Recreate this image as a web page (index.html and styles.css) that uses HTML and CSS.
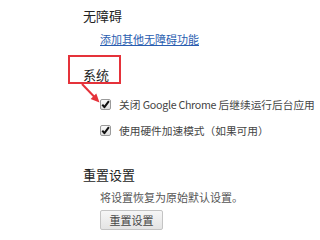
FILE: index.html
```html
<!DOCTYPE html>
<html lang="zh-CN">
<head>
<meta charset="utf-8">
<link rel="stylesheet" href="styles.css">
</head>
<body>
<div class="page">
  <section class="sec">
    <h3 class="title">无障碍</h3>
    <div class="body"><a class="link" href="#">添加其他无障碍功能</a></div>
  </section>
  <section class="sec sec-system">
    <h3 class="title">系统</h3>
    <div class="body">
      <label class="check">
        <svg class="box" width="11" height="11" viewBox="0 0 11 11"><defs><linearGradient id="g" x1="0" y1="0" x2="0" y2="1"><stop offset="0" stop-color="#fdfdfd"/><stop offset="1" stop-color="#dedede"/></linearGradient></defs><rect x="0.5" y="0.5" width="10" height="10" rx="1.5" fill="url(#g)" stroke="#9a9a9a"/><path d="M2.3 5.6 L4.4 8.2 L8.9 2.2" fill="none" stroke="#111" stroke-width="2" stroke-linejoin="round"/></svg>
        <span class="label">关闭 <span class="latin">Google Chrome</span> 后继续运行后台应用</span>
      </label>
      <label class="check">
        <svg class="box" width="11" height="11" viewBox="0 0 11 11"><rect x="0.5" y="0.5" width="10" height="10" rx="1.5" fill="url(#g)" stroke="#9a9a9a"/><path d="M2.3 5.6 L4.4 8.2 L8.9 2.2" fill="none" stroke="#111" stroke-width="2" stroke-linejoin="round"/></svg>
        <span class="label">使用硬件加速模式（如果可用）</span>
      </label>
    </div>
  </section>
  <section class="sec sec-reset">
    <h3 class="title">重置设置</h3>
    <div class="body">
      <p class="desc">将设置恢复为原始默认设置。</p>
      <button class="btn" type="button">重置设置</button>
    </div>
  </section>
  <div class="callout"></div>
  <svg class="arrow" width="320" height="235" viewBox="0 0 320 235"><line x1="82" y1="84" x2="94.5" y2="97" stroke="#e5323a" stroke-width="2"/><polygon points="99.5,102.5 90.6,98.9 96.3,93.6" fill="#e5323a"/></svg>
</div>
</body>
</html>
```

FILE: styles.css
```css
html, body {
  margin: 0;
  padding: 0;
  background: #fff;
}
.page {
  position: relative;
  width: 320px;
  height: 235px;
  overflow: hidden;
  padding-left: 83px;
  box-sizing: border-box;
  font-family: "Noto Sans CJK SC", "Microsoft YaHei", sans-serif;
  color: #444;
  font-size: 11px;
}
.sec { margin: 0; }
.title {
  margin: 0;
  font-size: 13px;
  font-weight: normal;
  line-height: 20px;
  height: 20px;
  color: #222;
}
.sec:first-child .title { margin-top: 6px; }
.body { padding-left: 17px; }
.link {
  display: block;
  margin-top: 4px;
  line-height: 18px;
  color: #2a5db0;
  text-decoration: underline;
}
.sec-system .title { margin-top: 17px; }
.sec-system .body { padding-top: 9px; display: flex; flex-direction: column; gap: 6px; }
.check {
  display: flex;
  align-items: center;
  gap: 8px;
  height: 20px;
  color: #444;
  white-space: nowrap;
}
.label { white-space: nowrap; font-size: 10.7px; }
.latin { letter-spacing: -0.3px; }
.box { display: block; flex: none; }
.sec-reset .title { margin-top: 25px; }
.desc {
  margin: 3px 0 0;
  line-height: 19px;
  color: #555;
}
.btn {
  display: block;
  margin-top: 3px;
  width: 63px;
  height: 20px;
  padding: 0;
  border: 1px solid #c4c4c4;
  border-radius: 2px;
  background: linear-gradient(#f6f6f6, #e4e4e4);
  font-family: inherit;
  font-size: 11px;
  color: #444;
  line-height: 18px;
}
.callout {
  position: absolute;
  left: 68px;
  top: 55px;
  width: 49px;
  height: 25px;
  border: 2px solid #e5323a;
}
.arrow {
  position: absolute;
  left: 0;
  top: 0;
  pointer-events: none;
}
```
